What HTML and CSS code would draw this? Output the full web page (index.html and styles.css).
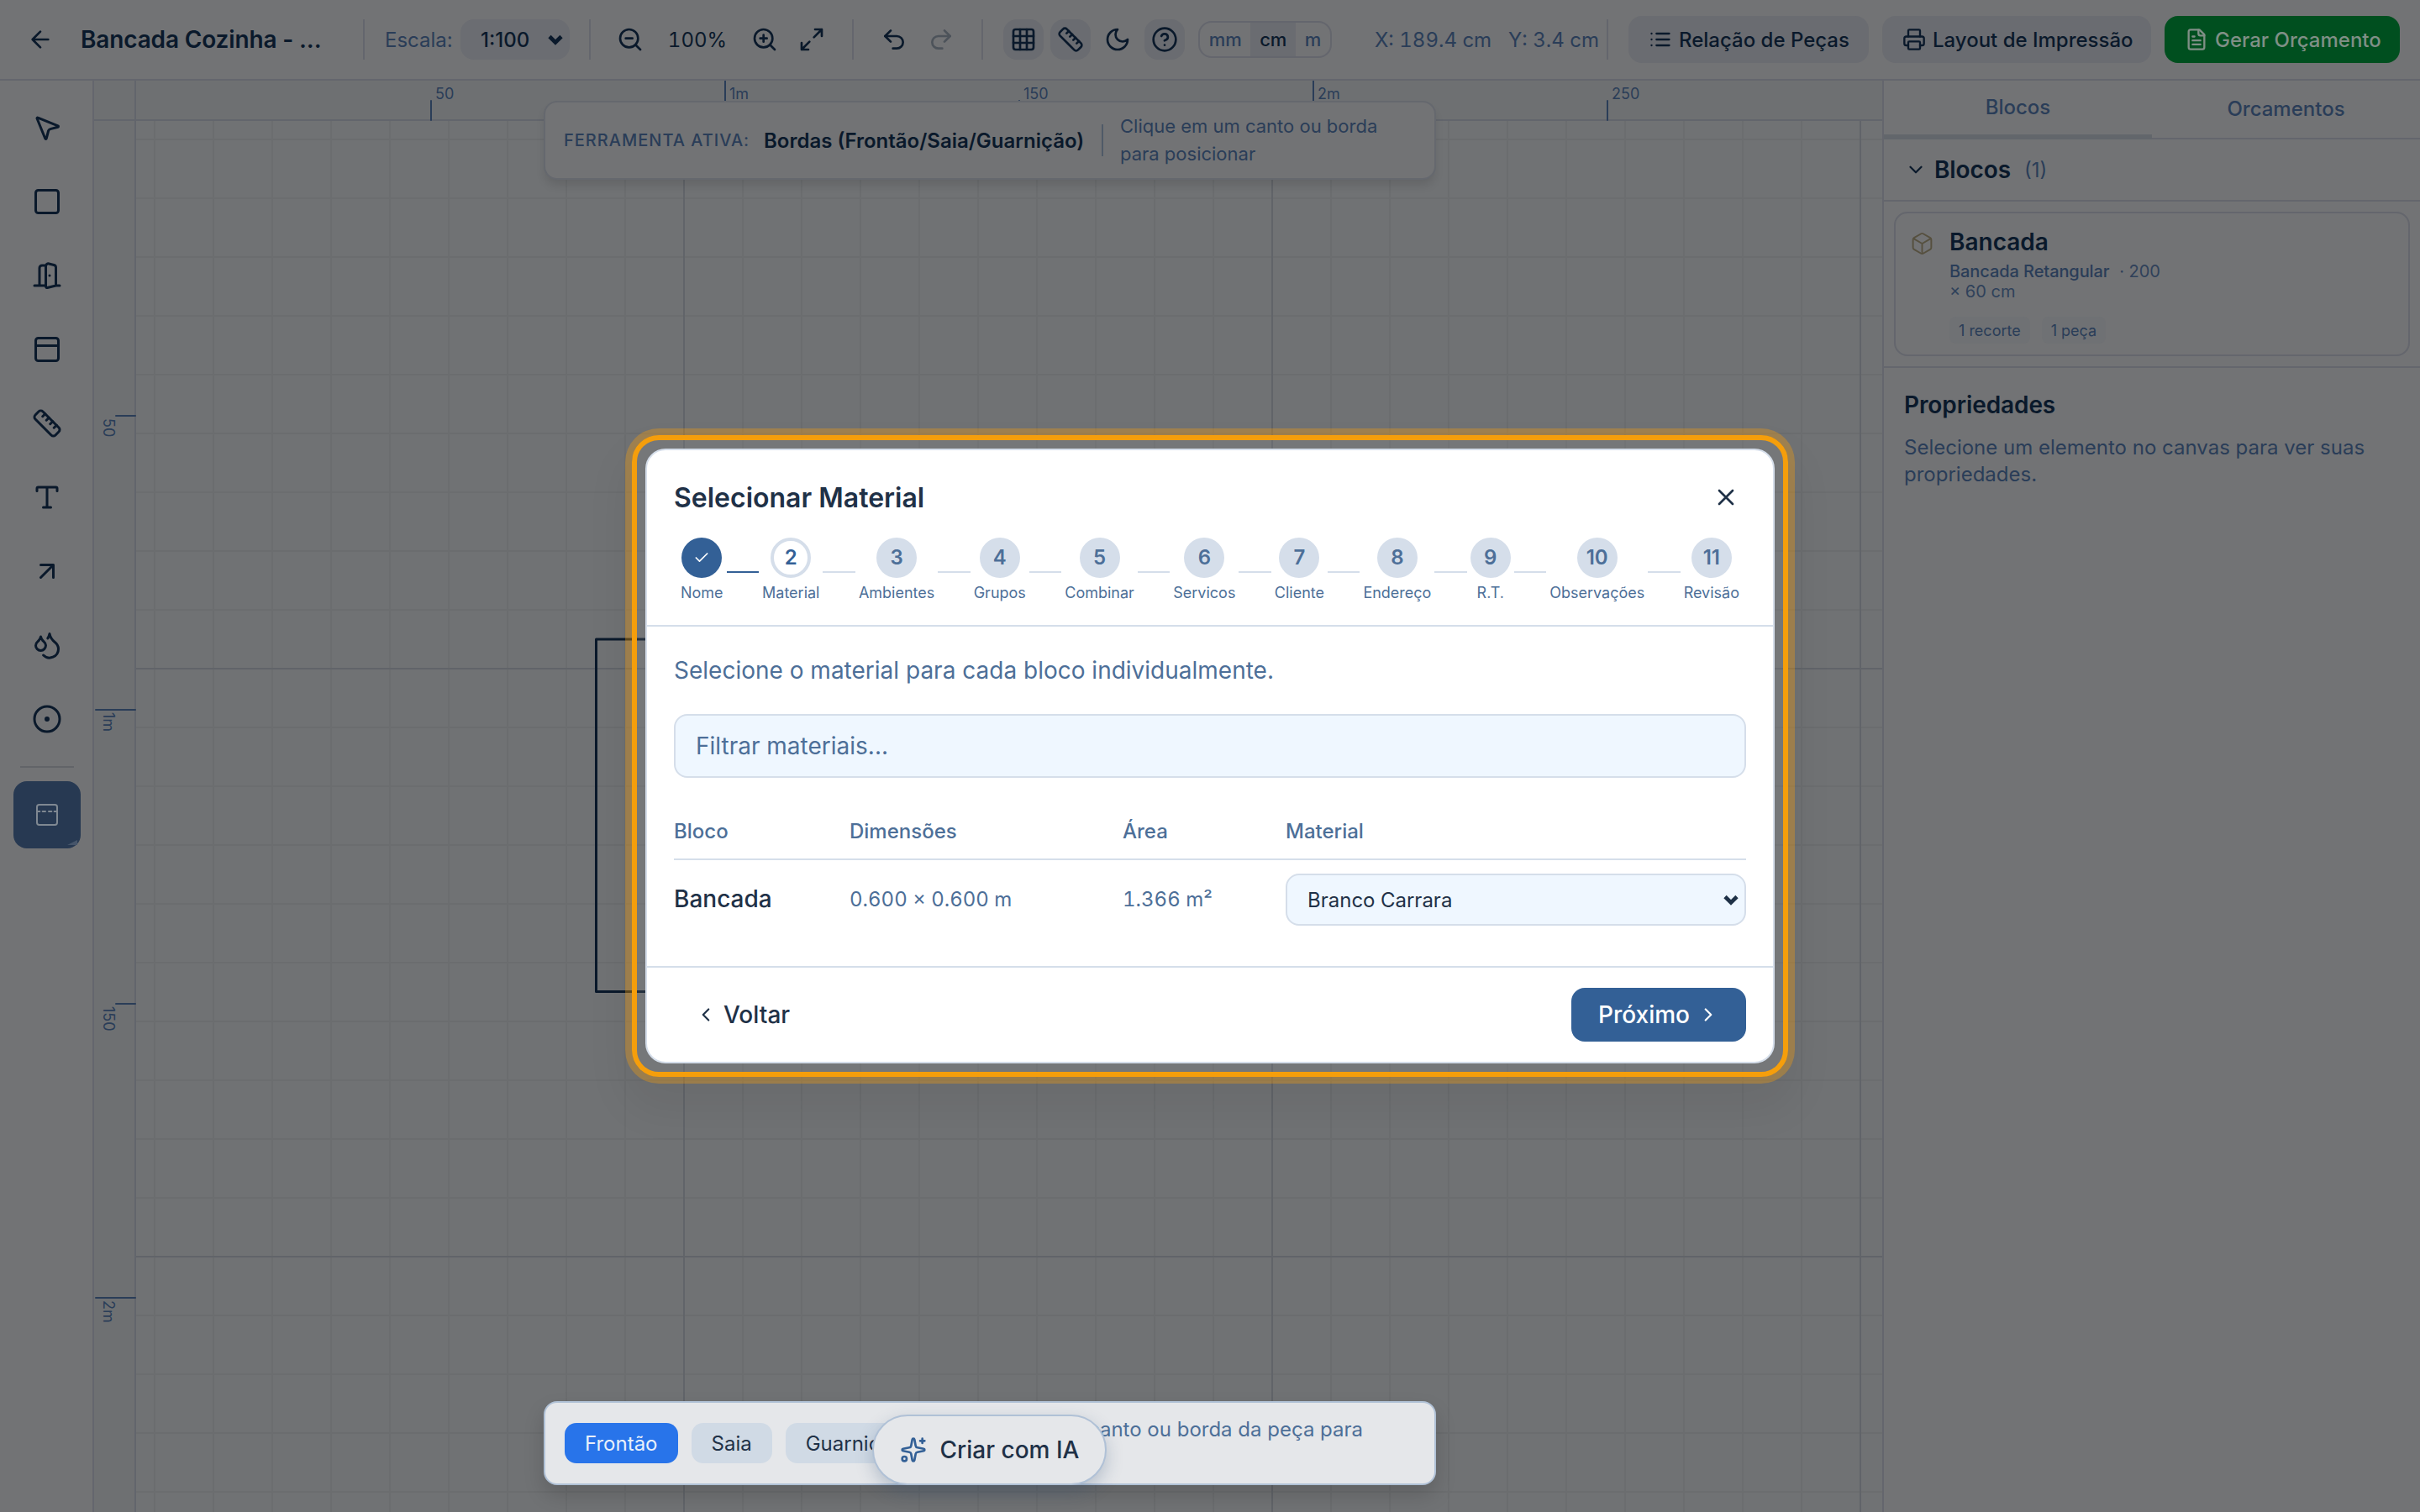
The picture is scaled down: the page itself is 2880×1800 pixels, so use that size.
FILE: index.html
```html
<!DOCTYPE html>
<html lang="pt-BR">
<head>
<meta charset="utf-8">
<title>Bancada Cozinha</title>
<link rel="stylesheet" href="styles.css">
</head>
<body>
<svg class="defs" width="0" height="0">
  <symbol id="i-back" viewBox="0 0 24 24"><path d="m12 19-7-7 7-7M19 12H5"/></symbol>
  <symbol id="i-chev" viewBox="0 0 24 24"><path d="m6 9 6 6 6-6"/></symbol>
  <symbol id="i-left" viewBox="0 0 24 24"><path d="m15 18-6-6 6-6"/></symbol>
  <symbol id="i-right" viewBox="0 0 24 24"><path d="m9 18 6-6-6-6"/></symbol>
  <symbol id="i-zout" viewBox="0 0 24 24"><circle cx="11" cy="11" r="8"/><path d="m21 21-4.35-4.35M8 11h6"/></symbol>
  <symbol id="i-zin" viewBox="0 0 24 24"><circle cx="11" cy="11" r="8"/><path d="m21 21-4.35-4.35M8 11h6M11 8v6"/></symbol>
  <symbol id="i-max" viewBox="0 0 24 24"><path d="M15 3h6v6M21 3l-7 7M3 21l7-7M9 21H3v-6"/></symbol>
  <symbol id="i-undo" viewBox="0 0 24 24"><path d="M9 14 4 9l5-5"/><path d="M4 9h10.5a5.5 5.5 0 0 1 0 11H11"/></symbol>
  <symbol id="i-redo" viewBox="0 0 24 24"><path d="m15 14 5-5-5-5"/><path d="M20 9H9.500a5.500 5.500 0 0 0 0 11H13"/></symbol>
  <symbol id="i-grid" viewBox="0 0 24 24"><rect x="3" y="3" width="18" height="18" rx="2"/><path d="M3 9h18M3 15h18M9 3v18M15 3v18"/></symbol>
  <symbol id="i-ruler" viewBox="0 0 24 24"><path d="M21.300 15.300a2.400 2.400 0 0 1 0 3.400l-2.600 2.600a2.400 2.400 0 0 1-3.400 0L2.700 8.700a2.410 2.410 0 0 1 0-3.400l2.600-2.600a2.410 2.410 0 0 1 3.400 0Z"/><path d="m14.500 12.500 2-2M11.500 9.500l2-2M8.500 6.500l2-2M17.500 15.500l2-2"/></symbol>
  <symbol id="i-moon" viewBox="0 0 24 24"><path d="M12 3a6 6 0 0 0 9 9 9 9 0 1 1-9-9Z"/></symbol>
  <symbol id="i-help" viewBox="0 0 24 24"><circle cx="12" cy="12" r="10"/><path d="M9.090 9a3 3 0 0 1 5.830 1c0 2-3 3-3 3M12 17h.01"/></symbol>
  <symbol id="i-list" viewBox="0 0 24 24"><path d="M8 6h13M8 12h13M8 18h13M3 6h.01M3 12h.01M3 18h.01"/></symbol>
  <symbol id="i-print" viewBox="0 0 24 24"><path d="M6 18H4a2 2 0 0 1-2-2v-5a2 2 0 0 1 2-2h16a2 2 0 0 1 2 2v5a2 2 0 0 1-2 2h-2"/><path d="M6 9V3a1 1 0 0 1 1-1h10a1 1 0 0 1 1 1v6"/><rect x="6" y="14" width="12" height="8" rx="1"/></symbol>
  <symbol id="i-file" viewBox="0 0 24 24"><path d="M15 2H6a2 2 0 0 0-2 2v16a2 2 0 0 0 2 2h12a2 2 0 0 0 2-2V7Z"/><path d="M14 2v4a2 2 0 0 0 2 2h4M10 9H8M16 13H8M16 17H8"/></symbol>
  <symbol id="i-pointer" viewBox="0 0 24 24"><path d="M4.037 4.688a.495.495 0 0 1 .651-.651l16 6.500a.5.500 0 0 1-.063.947l-6.124 1.580a2 2 0 0 0-1.438 1.435l-1.579 6.126a.5.500 0 0 1-.947.063z"/></symbol>
  <symbol id="i-square" viewBox="0 0 24 24"><rect x="3" y="3" width="18" height="18" rx="2"/></symbol>
  <symbol id="i-door" viewBox="0 0 24 24"><path d="M11 20H2M11 4.562v16.157a1 1 0 0 0 1.242.97L19 20V5.562a2 2 0 0 0-1.515-1.940l-4-1A2 2 0 0 0 11 4.561zM11 4H8a2 2 0 0 0-2 2v14M14 12h.01M22 20h-3"/></symbol>
  <symbol id="i-panel" viewBox="0 0 24 24"><rect x="3" y="3" width="18" height="18" rx="2"/><path d="M3 9h18"/></symbol>
  <symbol id="i-type" viewBox="0 0 24 24"><path d="M12 4v16M4 7V5a1 1 0 0 1 1-1h14a1 1 0 0 1 1 1v2M9 20h6"/></symbol>
  <symbol id="i-arrow" viewBox="0 0 24 24"><path d="M7 7h10v10M7 17 17 7"/></symbol>
  <symbol id="i-drops" viewBox="0 0 24 24"><path d="M7 16.300c2.200 0 4-1.830 4-4.050 0-1.160-.57-2.260-1.710-3.190S7.290 6.750 7 5.300c-.29 1.450-1.140 2.840-2.290 3.760S3 11.100 3 12.250c0 2.220 1.800 4.050 4 4.050z"/><path d="M12.560 6.600A10.970 10.970 0 0 0 14 3.020c.5 2.500 2 4.900 4 6.500s3 3.500 3 5.500a6.980 6.980 0 0 1-11.910 4.970"/></symbol>
  <symbol id="i-dot" viewBox="0 0 24 24"><circle cx="12" cy="12" r="10"/><circle cx="12" cy="12" r="1"/></symbol>
  <symbol id="i-edge" viewBox="0 0 24 24"><rect x="3" y="3" width="18" height="18" rx="2"/><path d="M3 9h2.500M8 9h2.500M13.500 9h2.500M18.500 9h2.500"/></symbol>
  <symbol id="i-box" viewBox="0 0 24 24"><path d="M21 8a2 2 0 0 0-1-1.730l-7-4a2 2 0 0 0-2 0l-7 4A2 2 0 0 0 3 8v8a2 2 0 0 0 1 1.730l7 4a2 2 0 0 0 2 0l7-4A2 2 0 0 0 21 16ZM3.300 7l8.700 5 8.700-5M12 22V12"/></symbol>
  <symbol id="i-x" viewBox="0 0 24 24"><path d="M18 6 6 18M6 6l12 12"/></symbol>
  <symbol id="i-check" viewBox="0 0 24 24"><path d="M20 6 9 17l-5-5"/></symbol>
  <symbol id="i-spark" viewBox="0 0 24 24"><path d="M11.017 2.814a1 1 0 0 1 1.966 0l1.051 5.558a2 2 0 0 0 1.594 1.594l5.558 1.051a1 1 0 0 1 0 1.966l-5.558 1.051a2 2 0 0 0-1.594 1.594l-1.051 5.558a1 1 0 0 1-1.966 0l-1.051-5.558a2 2 0 0 0-1.594-1.594l-5.558-1.051a1 1 0 0 1 0-1.966l5.558-1.051a2 2 0 0 0 1.594-1.594zM20 2v4M22 4h-4"/><circle cx="4" cy="20" r="2"/></symbol>
</svg>

<div class="app">
  <header class="topbar">
    <svg class="ic back"><use href="#i-back"/></svg>
    <h1 class="project">Bancada Cozinha - ...</h1>
    <i class="sep"></i>
    <span class="scale-label">Escala:</span>
    <div class="scale"><span>1:100</span><svg class="ic caret"><use href="#i-chev"/></svg></div>
    <i class="sep sep-b"></i>
    <svg class="ic zout"><use href="#i-zout"/></svg>
    <span class="pct">100%</span>
    <svg class="ic"><use href="#i-zin"/></svg>
    <svg class="ic max"><use href="#i-max"/></svg>
    <i class="sep sep-c"></i>
    <svg class="ic undo"><use href="#i-undo"/></svg>
    <svg class="ic redo"><use href="#i-redo"/></svg>
    <i class="sep sep-d"></i>
    <div class="toggles">
      <span class="tg on"><svg class="ic"><use href="#i-grid"/></svg></span>
      <span class="tg on"><svg class="ic"><use href="#i-ruler"/></svg></span>
      <span class="tg"><svg class="ic"><use href="#i-moon"/></svg></span>
      <span class="tg on"><svg class="ic"><use href="#i-help"/></svg></span>
    </div>
    <div class="units"><span>mm</span><span class="sel">cm</span><span>m</span></div>
    <div class="coords"><span class="cx">X: 189.4 cm</span><span>Y: 3.4 cm</span></div>
    <div class="actions">
      <button class="btn parts"><svg class="ic"><use href="#i-list"/></svg>Relação de Peças</button>
      <button class="btn print"><svg class="ic"><use href="#i-print"/></svg>Layout de Impressão</button>
      <button class="btn quote"><svg class="ic"><use href="#i-file"/></svg>Gerar Orçamento</button>
    </div>
  </header>

  <div class="work">
    <nav class="tools">
      <svg class="ti"><use href="#i-pointer"/></svg>
      <svg class="ti"><use href="#i-square"/></svg>
      <svg class="ti"><use href="#i-door"/></svg>
      <svg class="ti"><use href="#i-panel"/></svg>
      <svg class="ti"><use href="#i-ruler"/></svg>
      <svg class="ti"><use href="#i-type"/></svg>
      <svg class="ti"><use href="#i-arrow"/></svg>
      <svg class="ti"><use href="#i-drops"/></svg>
      <svg class="ti"><use href="#i-dot"/></svg>
      <i class="tsep"></i>
      <span class="active-tool"><svg><use href="#i-edge"/></svg></span>
    </nav>

    <main class="stage">
      <svg class="drawing" viewBox="112 96 2128 1704" width="2128" height="1704">
        <defs>
          <pattern id="minor" x="183" y="165" width="70" height="70" patternUnits="userSpaceOnUse"><path d="M0 1h70M1 0v70" class="g-minor"/></pattern>
          <pattern id="major" x="813" y="795" width="700" height="700" patternUnits="userSpaceOnUse"><path d="M0 1h700M1 0v700" class="g-major"/></pattern>
        </defs>
        <rect x="162" y="144" width="2078" height="1656" class="canvas"/>
        <rect x="162" y="144" width="2078" height="1656" fill="url(#minor)"/>
        <rect x="162" y="144" width="2078" height="1656" fill="url(#major)"/>
        <rect x="709.500" y="761" width="1350" height="419.500" class="piece"/>
        <path d="M112 96h2128v48H162v1656h-50z" class="ruler"/>
        <path d="M112 143h2128M161 96v1704" class="ruler-line"/>
        <path d="M513 120v23M863 96v47M1213 120v23M1563 96v47M1913 120v23M138 495h23M114 845h47M138 1195h23M114 1545h47" class="tick"/>
        <g class="tick-label">
          <text x="518" y="118">50</text><text x="868" y="118">1m</text><text x="1218" y="118">150</text><text x="1568" y="118">2m</text><text x="1918" y="118">250</text>
          <text transform="translate(123 498) rotate(90)">50</text><text transform="translate(123 848) rotate(90)">1m</text><text transform="translate(123 1198) rotate(90)">150</text><text transform="translate(123 1548) rotate(90)">2m</text>
        </g>
      </svg>
      <div class="hint">
        <span class="hint-k">FERRAMENTA ATIVA:</span>
        <strong>Bordas (Frontão/Saia/Guarnição)</strong>
        <i></i>
        <p>Clique em um canto ou borda para posicionar</p>
      </div>
      <div class="options">
        <span class="chip blue">Frontão</span>
        <span class="chip">Saia</span>
        <span class="chip">Guarnição</span>
        <p>Clique em um canto ou borda da peça para posicionar</p>
      </div>
      <button class="ai"><svg class="ic"><use href="#i-spark"/></svg>Criar com IA</button>
    </main>

    <aside class="side">
      <div class="tabs"><span class="tab cur">Blocos</span><span class="tab">Orcamentos</span></div>
      <div class="sect"><svg class="ic"><use href="#i-chev"/></svg><h2>Blocos</h2><span>(1)</span></div>
      <div class="list">
        <article class="card">
          <svg class="ic cube"><use href="#i-box"/></svg>
          <div>
            <h3>Bancada</h3>
            <p class="desc"><b>Bancada Retangular</b> · 200<br>× 60 cm</p>
            <div class="badges"><span>1 recorte</span><span>1 peça</span></div>
          </div>
        </article>
      </div>
      <section class="props">
        <h2>Propriedades</h2>
        <p>Selecione um elemento no canvas para ver suas propriedades.</p>
      </section>
    </aside>
  </div>

  <div class="ring">
    <div class="modal">
      <div class="m-head">
        <div class="m-title"><h2>Selecionar Material</h2><svg class="ic"><use href="#i-x"/></svg></div>
        <ol class="steps">
          <li class="done"><b><svg><use href="#i-check"/></svg></b>Nome</li><li class="line past"></li>
          <li class="now"><b>2</b>Material</li><li class="line"></li>
          <li><b>3</b>Ambientes</li><li class="line"></li>
          <li><b>4</b>Grupos</li><li class="line"></li>
          <li><b>5</b>Combinar</li><li class="line"></li>
          <li><b>6</b>Servicos</li><li class="line"></li>
          <li><b>7</b>Cliente</li><li class="line"></li>
          <li><b>8</b>Endereço</li><li class="line"></li>
          <li><b>9</b>R.T.</li><li class="line"></li>
          <li><b>10</b>Observações</li><li class="line"></li>
          <li><b>11</b>Revisão</li>
        </ol>
      </div>
      <div class="m-body">
        <p>Selecione o material para cada bloco individualmente.</p>
        <div class="filter">Filtrar materiais...</div>
        <div class="row th"><span>Bloco</span><span>Dimensões</span><span>Área</span><span>Material</span></div>
        <div class="row td"><strong>Bancada</strong><span>0.600 × 0.600 m</span><span>1.366 m²</span><div class="select">Branco Carrara<svg class="ic caret"><use href="#i-chev"/></svg></div></div>
      </div>
      <div class="m-foot">
        <span class="prev"><svg class="ic"><use href="#i-left"/></svg>Voltar</span>
        <button class="next">Próximo<svg class="ic"><use href="#i-right"/></svg></button>
      </div>
    </div>
  </div>
</div>
</body>
</html>
```
FILE: styles.css
```css
* { box-sizing: border-box; margin: 0; padding: 0; }
body { font-family: Inter, sans-serif; font-size: 24px; color: #0a192b; background: #727375; }
button { font: inherit; border: 0; }
.defs { position: absolute; }
svg { fill: none; stroke: currentColor; stroke-width: 2; stroke-linecap: round; stroke-linejoin: round; flex: none; }
.ic { width: 32px; height: 32px; }
.app { position: relative; width: 2880px; height: 1800px; overflow: hidden; display: flex; flex-direction: column; }

/* Top bar */
.topbar { height: 96px; flex: none; display: flex; align-items: center; border-bottom: 2px solid #64666d; padding-left: 32px; white-space: nowrap; }
.project { width: 336px; margin-left: 32px; font-size: 28px; font-weight: 600; letter-spacing: -.15px; }
.sep { width: 2px; height: 48px; background: #64666d; }
.scale-label { width: 90px; margin-left: 24px; color: #2a3d58; }
.scale { width: 130px; height: 48px; border-radius: 16px; background: #6b6d72; display: flex; align-items: center; justify-content: space-between; padding: 0 3px 0 24px; font-weight: 500; }
.caret { width: 28px; height: 28px; stroke-width: 4; stroke-linecap: butt; stroke-linejoin: miter; }
.sep-b { margin-left: 23px; }
.zout { margin-left: 31px; }
.pct { width: 128px; text-align: center; font-variant-numeric: tabular-nums; }
.max { margin-left: 24px; }
.sep-c { margin-left: 32px; }
.undo { margin-left: 32px; }
.redo { margin-left: 24px; opacity: .35; }
.sep-d { margin-left: 32px; }
.toggles { display: flex; gap: 8px; margin-left: 24px; }
.tg { width: 48px; height: 48px; border-radius: 16px; display: grid; place-items: center; }
.on { background: #6a6c71; }
.units { width: 159px; height: 44px; margin-left: 16px; border: 2px solid #64666d; border-radius: 16px; overflow: hidden; display: flex; font-size: 22px; font-weight: 500; color: #2a3d58; }
.units span { flex: 1 1 auto; display: grid; place-items: center; }
.units .sel { background: #6a6c71; color: #0a192b; }
.coords { width: 328px; height: 48px; display: flex; align-items: center; margin-left: 1px; padding-left: 50px; border-right: 2px solid #64666d; color: #2a3d58; font-variant-numeric: tabular-nums; }
.cx { width: 159px; }
.actions { display: flex; gap: 16px; margin-left: 24px; }
.btn { height: 56px; border-radius: 16px; background: #6a6c71; color: inherit; font-weight: 500; display: flex; align-items: center; padding-left: 24px; gap: 8px; }
.parts { width: 286px; }
.print { width: 320px; }
.quote { width: 280px; background: #004f1f; color: #7f8f86; }
.btn .ic { width: 28px; height: 28px; }

/* Work area */
.work { flex: 1; display: flex; min-height: 0; }
.tools { width: 112px; border-right: 2px solid #64666d; display: flex; flex-direction: column; align-items: center; padding: 38px 0 0 2px; }
.ti { width: 36px; height: 36px; margin-bottom: 52px; }
.tsep { width: 64px; height: 2px; background: #626468; margin-top: -14px; }
.active-tool { position: relative; width: 80px; height: 80px; margin-top: 16px; border-radius: 16px; background: #273952; color: #7f8892; display: grid; place-items: center; }
.active-tool svg { width: 32px; height: 32px; stroke-width: 1.5; }
.active-tool::after { content: ""; position: absolute; right: 4px; bottom: 4px; border-left: 12px solid transparent; border-bottom: 6px solid #46556a; }
.stage { position: relative; width: 2128px; }
.drawing { display: block; stroke: none; }
.canvas { fill: #707274; }
.g-minor { stroke: #6b6d6f; stroke-width: 2; }
.g-major { stroke: #616469; stroke-width: 2; }
.piece { stroke: #0a192b; stroke-width: 3; }
.ruler { fill: #6e7072; }
.ruler-line { stroke: #62656c; stroke-width: 2; }
.tick { stroke: #2a3d58; stroke-width: 2; }
.tick-label { fill: #2a3d58; font-size: 18px; }

.hint { position: absolute; left: 535px; top: 24px; width: 1062px; height: 94px; border: 2px solid #65686e; border-radius: 16px; background: #727375; box-shadow: 0 8px 12px -2px rgba(0,0,0,.12); display: flex; align-items: center; padding-left: 22px; white-space: nowrap; }
.hint-k { width: 238px; font-size: 20px; font-weight: 500; letter-spacing: 1px; color: #2a3d58; }
.hint strong { width: 402px; font-weight: 600; }
.hint i { width: 2px; height: 38px; background: #4f5a68; }
.hint p { width: 330px; margin-left: 20px; font-size: 22px; line-height: 33px; color: #2a3d58; white-space: normal; }

.options { position: absolute; left: 535px; top: 1572px; width: 1062px; height: 100px; border: 2px solid #b0c1d6; border-radius: 16px; background: #e5e7ea; color: #1f3147; box-shadow: 0 12px 24px rgba(0,0,0,.15); display: flex; align-items: center; padding-left: 23px; gap: 16px; }
.chip { height: 48px; border-radius: 14px; padding: 0 24px; display: flex; align-items: center; background: #d0dae5; }
.blue { background: #2874ea; color: #e8f0fa; }
.options p { width: 510px; margin-left: 17px; line-height: 33px; color: #4d6f98; }
.ai { position: absolute; left: 926px; top: 1588px; width: 279px; height: 84px; border: 2px solid #b0c1d6; border-radius: 42px; background: #e5e7ea; color: #1f3147; box-shadow: 0 8px 20px rgba(40,70,110,.25); font-size: 28px; font-weight: 500; display: flex; align-items: center; justify-content: center; gap: 16px; }
.ai .ic { color: #336096; }

/* Right panel */
.side { width: 640px; border-left: 2px solid #64666d; }
.tabs { height: 70px; display: flex; font-weight: 500; color: #2a3d58; }
.tab { flex: 1; display: grid; place-items: center; border-bottom: 2px solid #64666d; padding-bottom: 2px; }
.cur { border-bottom-width: 6px; border-color: #62666b; }
.sect { height: 74px; display: flex; align-items: center; padding-left: 25px; border-bottom: 2px solid #64666d; color: #2a3d58; }
.sect .ic { width: 26px; height: 26px; color: #0a192b; }
.sect h2 { color: #0a192b; font-size: 28px; font-weight: 600; margin: 0 16px 0 9px; letter-spacing: -.1px; }
.list { height: 198px; padding: 12px 12px 0; border-bottom: 2px solid #64666d; }
.card { height: 172px; border: 2px solid #64666d; border-radius: 16px; display: flex; padding: 16px 17px; gap: 18px; }
.cube { width: 29px; height: 32px; margin-top: 4px; stroke-width: 1.6; color: #56503f; }
.card h3 { font-size: 28px; font-weight: 600; line-height: 36px; }
.desc { font-size: 20px; line-height: 24px; margin-top: 5px; color: #2f415a; }
.desc b { font-weight: 500; margin-right: 6px; color: #2a3d58; letter-spacing: -.08px; }
.badges { display: flex; gap: 14px; margin-top: 18px; font-size: 18px; color: #2a3d58; }
.badges span { height: 32px; padding: 0 11px; border-radius: 8px; background: #6f7174; display: grid; place-items: center; }
.props { padding: 26px 24px; }
.props h2 { font-size: 28px; font-weight: 600; line-height: 36px; letter-spacing: -.1px; }
.props p { width: 560px; margin-top: 17px; font-size: 24px; line-height: 32px; color: #2a3d58; }

/* Dialog */
.ring { position: absolute; left: 752px; top: 518px; padding: 10px; border: 6px solid #f59e0b; border-radius: 32px; box-shadow: 0 0 0 8px rgba(245,158,11,.35), 0 30px 50px 10px rgba(0,0,0,.06); background: rgba(140,142,146,.2); }
.modal { width: 1344px; height: 732px; border: 2px solid #d5deea; border-radius: 24px; background: #fff; color: #1f3147; display: flex; flex-direction: column; }
.m-head { height: 210px; padding: 34px 32px 0; border-bottom: 2px solid #d5deea; }
.m-title { display: flex; justify-content: space-between; align-items: center; height: 44px; padding-right: 8px; }
.m-title h2 { font-size: 32px; font-weight: 600; }
.steps { list-style: none; display: flex; align-items: flex-start; margin-top: 26px; padding: 0 8px; font-size: 18px; color: #4d6f98; }
.steps li { display: flex; flex-direction: column; align-items: center; gap: 6px; line-height: 24px; }
.steps b { width: 48px; height: 48px; border-radius: 50%; background: #d5deea; display: grid; place-items: center; font-size: 24px; font-weight: 600; }
.steps .done b { background: #336096; color: #fff; }
.done svg { width: 20px; height: 20px; }
.steps .now b { background: #fff; border: 4px solid #d5deea; color: #336096; }
.steps .line { flex: 1; height: 2px; margin: 40px 4px 0; background: #d5deea; }
.steps .past { background: #336096; }
.m-body { flex: 1; padding: 35px 32px 0; color: #4d6f98; }
.m-body p { font-size: 28px; line-height: 34px; }
.filter { height: 76px; margin-top: 35px; border: 2px solid #d5deea; border-radius: 16px; background: #eff7ff; padding-left: 24px; display: flex; align-items: center; font-size: 28px; }
.row { display: grid; grid-template-columns: 209px 325px 194px 1fr; align-items: center; font-variant-numeric: tabular-nums; }
.th { height: 66px; margin-top: 32px; padding-bottom: 2px; border-bottom: 2px solid #d5deea; font-weight: 500; }
.td { height: 94px; }
.td > strong, .td > span { padding-bottom: 2px; }
.td strong { font-size: 28px; font-weight: 500; color: #1f3147; }
.select { height: 62px; border: 2px solid #d5deea; border-radius: 16px; background: #eff7ff; color: #1f3147; display: flex; align-items: center; justify-content: space-between; padding: 0 2px 0 24px; }
.m-foot { height: 114px; border-top: 2px solid #d5deea; padding: 0 32px; display: flex; align-items: center; justify-content: space-between; font-size: 28px; font-weight: 500; }
.prev, .next { display: flex; align-items: center; }
.prev { padding-left: 25px; gap: 8px; }
.prev .ic, .next .ic { width: 26px; height: 26px; }
.next { width: 208px; height: 64px; border-radius: 16px; background: #336096; color: #fff; padding-left: 32px; gap: 9px; }
```
